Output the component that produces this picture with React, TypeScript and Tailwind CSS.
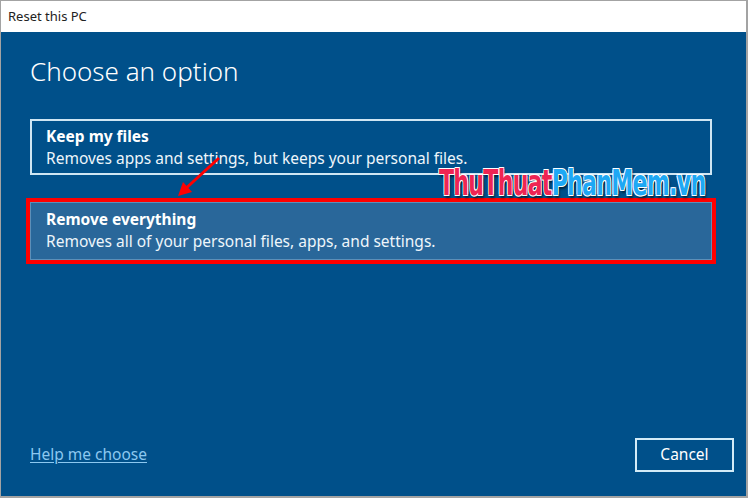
const ui = "font-['Noto_Sans','Open_Sans','Liberation_Sans',sans-serif]";

function Option({
  title,
  desc,
  selected,
}: {
  title: string;
  desc: string;
  selected?: boolean;
}) {
  return (
    <div
      className={
        selected
          ? "h-[58px] border border-[#5d8fb8] bg-[#29679a] px-[15px] pt-[5px] text-white"
          : "h-[56px] border-2 border-[#cfe6f3] px-[14px] pt-[4px] text-white"
      }
    >
      <div className="text-[15.5px] font-bold leading-[22px]">{title}</div>
      <div className="text-[15.5px] leading-[22px] text-[#eef6fb]">{desc}</div>
    </div>
  );
}

export default function App() {
  return (
    <div className={`relative flex h-[498px] w-[748px] flex-col border border-r-2 border-b-2 border-[#a3a3a3] bg-[#00508a] ${ui}`}>
      {/* title bar */}
      <div className="flex h-[31px] items-center bg-white px-[7px] text-[13px] text-[#222]">
        Reset this PC
      </div>

      <div className="flex flex-1 flex-col pl-[29px] pr-[34px]">
        <h1 className="mt-[22px] text-[26px] font-light leading-[34px] text-white">
          Choose an option
        </h1>

        <div className="mt-[31px]">
          <Option
            title="Keep my files"
            desc="Removes apps and settings, but keeps your personal files."
          />
        </div>

        <div className="relative mt-[27px]">
          <Option
            selected
            title="Remove everything"
            desc="Removes all of your personal files, apps, and settings."
          />
          <div className="pointer-events-none absolute -inset-[4px] border-[4px] border-[#ff0000]" />
        </div>

        <div className="flex-1" />

        <div className="mb-[24px] flex items-center justify-between">
          <a className="text-[15.5px] text-[#8cc8f0] underline underline-offset-2">
            Help me choose
          </a>
          <button className="-mr-[22px] h-[34px] w-[99px] border-2 border-[#d3ebf7] text-[15.5px] text-white">
            Cancel
          </button>
        </div>
      </div>

      {/* annotation arrow */}
      <svg className="pointer-events-none absolute left-[170px] top-[150px]" width="56" height="52" viewBox="0 0 56 52">
        <line x1="48" y1="7" x2="12" y2="40" stroke="#ff0000" strokeWidth="3" />
        <polygon points="7,45 12,31 21,41" fill="#ff0000" />
      </svg>

      {/* watermark */}
      <div className="pointer-events-none absolute left-[438px] top-[161px] origin-left scale-x-[0.7] whitespace-nowrap font-['DejaVu_Sans_Condensed','Liberation_Sans_Narrow',sans-serif] text-[35px] font-bold leading-[42px] tracking-[-1px] [text-shadow:-1px_-1px_0_#fff,1px_-1px_0_#fff,-1px_1px_0_#fff,1px_1px_0_#fff,2px_3px_3px_rgba(0,0,0,0.6)]">
        <span className="text-[#ee2553]">ThuThuat</span>
        <span className="text-[#1ea8f4]">PhanMem.vn</span>
      </div>
    </div>
  );
}
